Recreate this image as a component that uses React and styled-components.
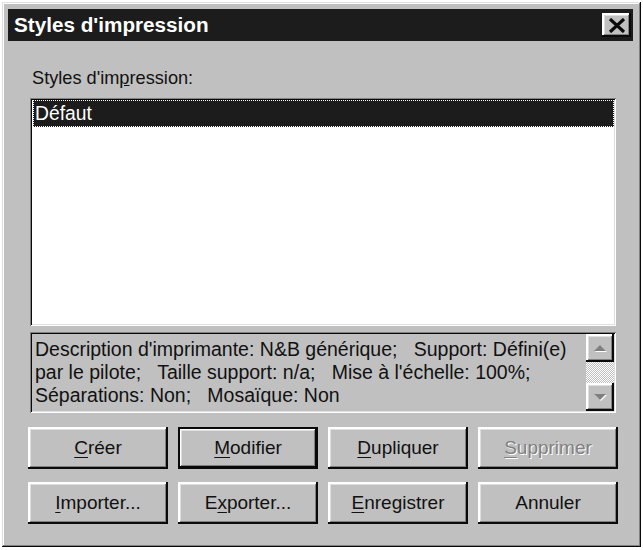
import React from 'react';
import styled, { createGlobalStyle, css } from 'styled-components';

const Global = createGlobalStyle`
  html, body { margin: 0; padding: 0; background: #ffffff; }
  body { font-family: "Liberation Sans", Arial, sans-serif; }
  #root { padding: 2px; }
`;

const raised = css`
  box-shadow:
    inset -2px -2px #0a0a0a,
    inset 2px 2px #ffffff,
    inset -3px -3px #808080,
    inset 3px 3px #dfdfdf;
`;

const sunken = css`
  box-shadow:
    inset 1px 1px #808080,
    inset -1px -1px #ffffff,
    inset 2px 2px #0a0a0a,
    inset -2px -2px #dfdfdf;
`;

const Window = styled.div`
  width: 639px;
  height: 545px;
  box-sizing: border-box;
  background: #c0c0c0;
  padding: 7px 8px 0 6px;
  display: flex;
  flex-direction: column;
  box-shadow:
    inset -1px -1px #0a0a0a,
    inset 1px 1px #dfdfdf,
    inset -2px -2px #808080,
    inset 2px 2px #ffffff;
`;

const TitleBar = styled.div`
  height: 32px;
  background: #1c1c1c;
  display: flex;
  align-items: center;
  justify-content: space-between;
  padding: 0 2px 0 6px;
`;

const Title = styled.span`
  color: #ffffff;
  font-weight: bold;
  font-size: 20.7px;
`;

const CloseButton = styled.div`
  width: 29px;
  height: 24px;
  background: #c0c0c0;
  display: flex;
  align-items: center;
  justify-content: center;
  ${raised}
`;

const Body = styled.div`
  display: flex;
  flex-direction: column;
  padding: 0 15px 0 20px;
  font-size: 18px;
  color: #111111;
`;

const Label = styled.div`
  margin: 27px 0 0 4px;
  line-height: 20px;
  font-size: 18.2px;
`;

const ListBox = styled.div`
  margin: 10px 2px 0 2px;
  height: 228px;
  box-sizing: border-box;
  background: #ffffff;
  padding: 2px 2px 2px 3px;
  ${sunken}
`;

const ListItem = styled.div`
  height: 27px;
  line-height: 27px;
  padding-left: 2px;
  font-size: 19.3px;
  background: ${(p) => (p.$selected ? '#1c1c1c' : 'transparent')};
  color: ${(p) => (p.$selected ? '#ffffff' : '#111111')};
  outline: ${(p) => (p.$selected ? '1px dotted #ffffff' : 'none')};
  outline-offset: -1px;
`;

const Description = styled.div`
  margin: 6px 2px 0 2px;
  height: 81px;
  box-sizing: border-box;
  padding: 2px;
  display: flex;
  background: #c0c0c0;
  ${sunken}
`;

const DescText = styled.div`
  flex: 1;
  padding: 4px 0 0 3px;
  font-size: 19.5px;
  line-height: 23px;
  white-space: pre;
  overflow: hidden;
`;

const ScrollBar = styled.div`
  width: 28px;
  display: flex;
  flex-direction: column;
`;

const ScrollButton = styled.div`
  height: 28px;
  background: #c0c0c0;
  display: flex;
  align-items: center;
  justify-content: center;
  ${raised}
`;

const ScrollTrack = styled.div`
  flex: 1;
  background: repeating-conic-gradient(#c0c0c0 0 25%, #ffffff 0 50%) 0 0 / 2px 2px;
`;

const ButtonGrid = styled.div`
  margin-top: 14px;
  display: grid;
  grid-template-columns: repeat(4, 140px);
  grid-auto-rows: 42px;
  column-gap: 10px;
  row-gap: 13px;
`;

const Button = styled.div`
  background: #c0c0c0;
  display: flex;
  align-items: center;
  justify-content: center;
  font-size: 19px;
  color: ${(p) => (p.$disabled ? '#808080' : '#111111')};
  text-shadow: ${(p) => (p.$disabled ? '1px 1px #ffffff' : 'none')};
  ${(p) =>
    p.$default
      ? css`
          box-shadow:
            inset 0 0 0 2px #0a0a0a,
            inset -3px -3px #0a0a0a,
            inset 3px 3px #ffffff,
            inset -4px -4px #808080,
            inset 4px 4px #dfdfdf;
        `
      : raised}
  u {
    text-decoration-thickness: 1px;
    text-underline-offset: 3px;
  }
`;

const Arrow = ({ up }) => (
  <svg width="15" height="10" viewBox="0 0 15 10">
    <polygon
      points={up ? '1,8 13,8 7,2' : '1,2 13,2 7,8'}
      fill="#ffffff"
      transform="translate(1,1)"
    />
    <polygon points={up ? '1,8 13,8 7,2' : '1,2 13,2 7,8'} fill="#808080" />
  </svg>
);

const CloseIcon = () => (
  <svg width="18" height="15" viewBox="0 0 18 15">
    <path d="M2 1 L16 14 M16 1 L2 14" stroke="#0a0a0a" strokeWidth="3.2" fill="none" />
  </svg>
);

const buttons = [
  { key: 'creer', pre: '', m: 'C', post: 'réer' },
  { key: 'modifier', pre: '', m: 'M', post: 'odifier', def: true },
  { key: 'dupliquer', pre: '', m: 'D', post: 'upliquer' },
  { key: 'supprimer', pre: '', m: 'S', post: 'upprimer', disabled: true },
  { key: 'importer', pre: '', m: 'I', post: 'mporter...' },
  { key: 'exporter', pre: 'E', m: 'x', post: 'porter...' },
  { key: 'enregistrer', pre: '', m: 'E', post: 'nregistrer' },
  { key: 'annuler', pre: 'Annuler', m: '', post: '' },
];

export default function App() {
  return (
    <>
      <Global />
      <Window>
        <TitleBar>
          <Title>Styles d'impression</Title>
          <CloseButton>
            <CloseIcon />
          </CloseButton>
        </TitleBar>
        <Body>
          <Label>
            Styles d'im<u>p</u>ression:
          </Label>
          <ListBox>
            <ListItem $selected>Défaut</ListItem>
          </ListBox>
          <Description>
            <DescText>
              {'Description d\'imprimante: N&B générique;   Support: Défini(e)\n' +
                'par le pilote;   Taille support: n/a;   Mise à l\'échelle: 100%;\n' +
                'Séparations: Non;   Mosaïque: Non'}
            </DescText>
            <ScrollBar>
              <ScrollButton>
                <Arrow up />
              </ScrollButton>
              <ScrollTrack />
              <ScrollButton>
                <Arrow />
              </ScrollButton>
            </ScrollBar>
          </Description>
          <ButtonGrid>
            {buttons.map((b) => (
              <Button key={b.key} $default={b.def} $disabled={b.disabled}>
                <span>
                  {b.pre}
                  {b.m && <u>{b.m}</u>}
                  {b.post}
                </span>
              </Button>
            ))}
          </ButtonGrid>
        </Body>
      </Window>
    </>
  );
}
